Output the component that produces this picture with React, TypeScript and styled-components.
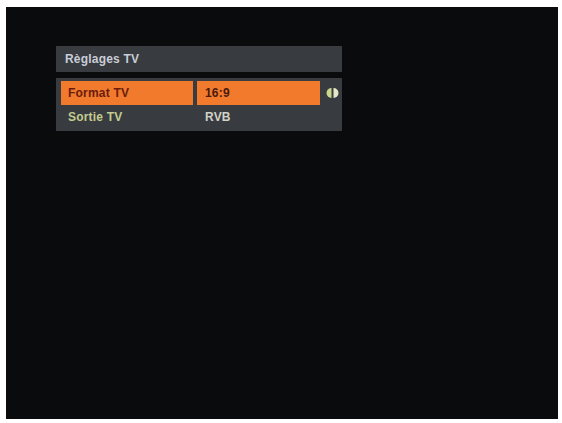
import styled, { createGlobalStyle } from "styled-components";

const GlobalStyle = createGlobalStyle`
  html, body {
    margin: 0;
    padding: 0;
    background: #ffffff;
  }
  body {
    font-family: "Liberation Sans", Arial, sans-serif;
  }
`;

const rows = [
  { label: "Format TV", value: "16:9", active: true },
  { label: "Sortie TV", value: "RVB", active: false },
];

const App = () => {
  return (
    <>
      <GlobalStyle />
      <Screen>
        <Menu>
          <TitleBar>Règlages TV</TitleBar>
          <Body>
            {rows.map((r) => (
              <Row key={r.label}>
                <Label $active={r.active}>{r.label}</Label>
                <Value $active={r.active}>{r.value}</Value>
                <ArrowSlot>
                  {r.active && (
                    <svg width="17" height="10" viewBox="0 0 17 10">
                      <path d="M7.5 0 A5 5 0 0 0 7.5 10 Z" fill="#c8d88a" />
                      <path d="M9.5 0 A5 5 0 0 1 9.5 10 Z" fill="#e4e8c8" />
                    </svg>
                  )}
                </ArrowSlot>
              </Row>
            ))}
          </Body>
        </Menu>
      </Screen>
    </>
  );
};

export default App;

const Screen = styled.div`
  margin: 7px 4px 0 6px;
  width: 552px;
  height: 412px;
  background: #0a0b0c;
  padding: 39px 0 0 50px;
  box-sizing: border-box;
`;

const Menu = styled.div`
  width: 286px;
  display: flex;
  flex-direction: column;
  gap: 6px;
`;

const TitleBar = styled.div`
  height: 26px;
  background: #383b3f;
  color: #c9cdd8;
  font-size: 12px;
  font-weight: bold;
  line-height: 26px;
  padding-left: 9px;
  letter-spacing: 0.2px;
`;

const Body = styled.div`
  background: #383b3f;
  padding: 3px 0 2px 5px;
  display: flex;
  flex-direction: column;
`;

const Row = styled.div`
  display: grid;
  grid-template-columns: 132px 123px 26px;
  column-gap: 4px;
  height: 24px;
  align-items: stretch;
`;

const Label = styled.div<{ $active: boolean }>`
  background: ${(p) => (p.$active ? "#f27a2c" : "transparent")};
  color: ${(p) => (p.$active ? "#6b1c0c" : "#c4cc8e")};
  font-size: 12px;
  font-weight: bold;
  line-height: 24px;
  padding-left: 7px;
  letter-spacing: 0.2px;
`;

const Value = styled.div<{ $active: boolean }>`
  background: ${(p) => (p.$active ? "#f27a2c" : "transparent")};
  color: ${(p) => (p.$active ? "#4a1a0c" : "#d2d2c8")};
  font-size: 12px;
  font-weight: bold;
  line-height: 24px;
  padding-left: 8px;
  letter-spacing: 0.2px;
`;

const ArrowSlot = styled.div`
  display: flex;
  align-items: center;
`;
